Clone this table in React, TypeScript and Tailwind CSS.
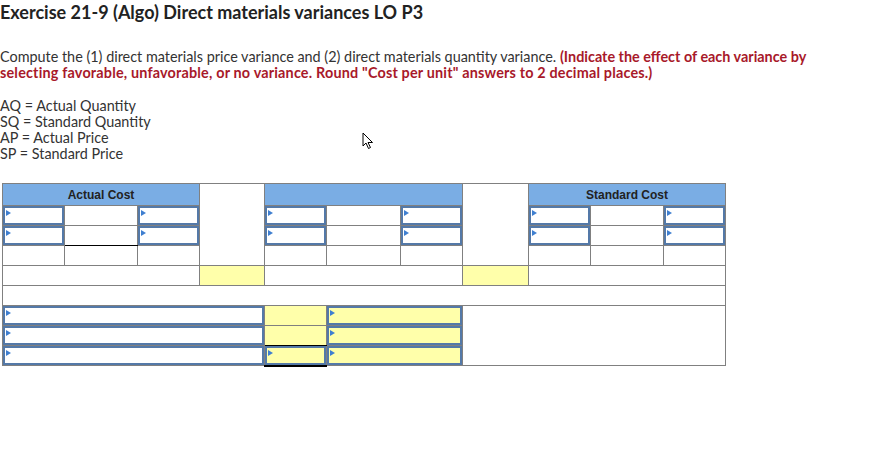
import React from 'react';

const Marker = () => (
  <span className="absolute left-[1px] top-[2px] h-0 w-0 border-y-[3px] border-l-[5px] border-y-transparent border-l-[#3f7fd0]" />
);

const InputCell = ({
  span = 1,
  yellow = false,
  black = false,
}: {
  span?: number;
  yellow?: boolean;
  black?: boolean;
}) => (
  <td
    colSpan={span}
    className={`p-0 h-[20px] border border-[#808080] ${black ? 'border-b-2 border-b-black' : ''} ${
      yellow ? 'bg-[#ffffaa]' : 'bg-white'
    }`}
  >
    <div className="relative h-full w-full border-2 border-[#5479a8]">
      <Marker />
    </div>
  </td>
);

const Cell = ({
  span = 1,
  rows = 1,
  yellow = false,
  black = false,
}: {
  span?: number;
  rows?: number;
  yellow?: boolean;
  black?: boolean;
}) => (
  <td
    colSpan={span}
    rowSpan={rows}
    className={`p-0 h-[20px] border border-[#808080] ${black ? 'border-b-black' : ''} ${
      yellow ? 'bg-[#ffffaa]' : 'bg-white'
    }`}
  />
);

const Header = ({ label }: { label?: string }) => (
  <td
    colSpan={3}
    className="h-[22px] border border-[#808080] bg-[#7aade4] p-0 text-center align-middle text-[12px] font-bold text-[#222]"
    style={{ fontFamily: '"Liberation Sans", Arial, sans-serif' }}
  >
    {label}
  </td>
);

const widths = [62, 73, 62, 65, 62, 74, 62, 66, 62, 73, 62];

export default function App() {
  return (
    <div className="relative h-[449px] w-[893px] bg-white text-[#333]" style={{ fontFamily: 'Lato, "Open Sans", sans-serif' }}>
      <h1 className="text-[18px] font-bold leading-[25px] text-[#222]">
        Exercise 21-9 (Algo) Direct materials variances LO P3
      </h1>

      <p className="mt-[24px] whitespace-nowrap text-[14.4px] leading-[16px]">
        Compute the (1) direct materials price variance and (2) direct materials quantity variance.{' '}
        <span className="font-bold text-[#a8192a]">(Indicate the effect of each variance by</span>
        <br />
        <span className="font-bold tracking-[0.18px] text-[#a8192a]">
          selecting favorable, unfavorable, or no variance. Round "Cost per unit" answers to 2 decimal places.)
        </span>
      </p>

      <div className="mt-[17px] text-[14.4px] leading-[16px]">
        <div>AQ = Actual Quantity</div>
        <div>SQ = Standard Quantity</div>
        <div>AP = Actual Price</div>
        <div>SP = Standard Price</div>
      </div>

      <table className="ml-[2px] mt-[21px] w-[723px] table-fixed border-collapse">
        <colgroup>
          {widths.map((w, i) => (
            <col key={i} style={{ width: w }} />
          ))}
        </colgroup>
        <tbody>
          <tr>
            <Header label="Actual Cost" />
            <Cell rows={4} />
            <Header />
            <Cell rows={4} />
            <Header label="Standard Cost" />
          </tr>
          <tr>
            <InputCell />
            <Cell />
            <InputCell />
            <InputCell />
            <Cell />
            <InputCell />
            <InputCell />
            <Cell />
            <InputCell />
          </tr>
          <tr>
            <InputCell />
            <Cell black />
            <InputCell />
            <InputCell />
            <Cell />
            <InputCell />
            <InputCell />
            <Cell />
            <InputCell />
          </tr>
          <tr>
            <Cell />
            <Cell />
            <Cell />
            <Cell />
            <Cell />
            <Cell />
            <Cell />
            <Cell />
            <Cell />
          </tr>
          <tr>
            <Cell span={3} />
            <Cell yellow />
            <Cell span={3} />
            <Cell yellow />
            <Cell span={3} />
          </tr>
          <tr>
            <Cell span={11} />
          </tr>
          <tr>
            <InputCell span={4} />
            <Cell yellow />
            <InputCell span={2} yellow />
            <Cell span={4} rows={3} />
          </tr>
          <tr>
            <InputCell span={4} />
            <Cell yellow black />
            <InputCell span={2} yellow />
          </tr>
          <tr>
            <InputCell span={4} />
            <InputCell yellow black />
            <InputCell span={2} yellow />
          </tr>
        </tbody>
      </table>

      <svg className="absolute left-[362px] top-[132px]" width="13" height="18" viewBox="0 0 13 18">
        <path d="M1 1 L1 14 L4 11 L6.5 16.5 L8.5 15.5 L6 10.5 L10.5 10.5 Z" fill="white" stroke="black" strokeWidth="1" strokeLinejoin="round" />
      </svg>
    </div>
  );
}
